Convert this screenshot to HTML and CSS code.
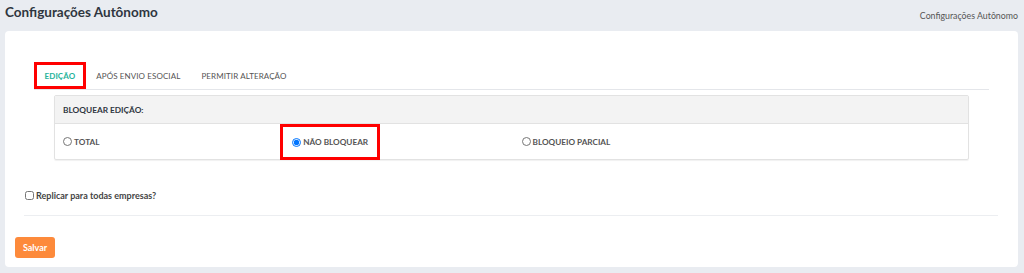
FILE: index.html
```html
<!DOCTYPE html>
<html lang="pt-BR">
<head>
    <meta charset="UTF-8">
    <meta name="viewport" content="width=device-width, initial-scale=1.0">
    <title>Configurações Autônomo</title>
    <link rel="stylesheet" href="styles.css">
</head>
<body>
    <div class="page-header">
        <h1>Configurações Autônomo</h1>
        <div class="breadcrumb">Configurações Autônomo</div>
    </div>

    <div class="card">
        <div class="form-body">
            <div class="tabs-wrap">
                <ul class="tabs">
                    <li class="tab active marked">EDIÇÃO</li>
                    <li class="tab">APÓS ENVIO ESOCIAL</li>
                    <li class="tab">PERMITIR ALTERAÇÃO</li>
                </ul>

                <div class="panel">
                    <div class="panel-heading">BLOQUEAR EDIÇÃO:</div>
                    <div class="panel-body">
                        <label class="option">
                            <input type="radio" name="bloqueio">TOTAL
                        </label>
                        <div class="option-cell">
                            <label class="option marked">
                                <input type="radio" name="bloqueio" checked>NÃO BLOQUEAR
                            </label>
                        </div>
                        <label class="option">
                            <input type="radio" name="bloqueio">BLOQUEIO PARCIAL
                        </label>
                    </div>
                </div>
            </div>

            <label class="replicar">
                <input type="checkbox">Replicar para todas empresas?
            </label>

            <hr>
        </div>

        <button class="btn-save">Salvar</button>
    </div>
</body>
</html>
```

FILE: styles.css
```css
body {
    font-family: 'Lato', 'Open Sans', sans-serif;
    background-color: #e9ecf1;
    color: #333;
    margin: 0;
    padding: 0 6px 0 5px;
}

.page-header {
    display: flex;
    justify-content: space-between;
    align-items: center;
    height: 31px;
}

h1 {
    font-size: 13.5px;
    font-weight: 700;
    color: #2f3640;
    margin: 0 0 8px 0;
}

.breadcrumb {
    font-size: 8.8px;
    color: #555;
    margin-top: 0;
}

.card {
    background-color: white;
    border-radius: 4px;
    padding: 31px 10px 9px 10px;
}

.form-body {
    padding: 0 10px 0 9px;
}

.tabs-wrap {
    padding: 0 9px 0 10px;
}

.tabs {
    list-style: none;
    margin: 0;
    padding: 0;
    display: flex;
    border-bottom: 1px solid #e4e6ea;
}

.tab {
    font-size: 8px;
    color: #555;
    padding: 0 10.5px;
    height: 27px;
    line-height: 28px;
    letter-spacing: 0.1px;
}

.tab.active {
    color: #26b39b;
    font-weight: 700;
}

.marked {
    outline: 3px solid #ff0000;
    outline-offset: -3px;
}

.panel {
    margin: 5px 20px 0 20px;
    border: 1px solid #e2e2e2;
    border-radius: 2px;
    box-shadow: 0 1px 1px rgba(0,0,0,0.06);
}

.panel-heading {
    background-color: #f3f3f3;
    border-bottom: 1px solid #e2e2e2;
    font-size: 8.3px;
    font-weight: 700;
    color: #2f3640;
    height: 27px;
    line-height: 28px;
    padding-left: 8px;
}

.panel-body {
    display: grid;
    grid-template-columns: repeat(4, 1fr);
    height: 35px;
    align-items: center;
}

.option {
    font-size: 8.2px;
    font-weight: 700;
    color: #555;
    padding-left: 8px;
    display: flex;
    align-items: center;
}

.option-cell {
    height: 35px;
    display: flex;
    align-items: stretch;
    margin-left: -3px;
}

.option-cell .option {
    padding: 0 12px 0 12px;
    height: 36px;
}

.option-cell + .option {
    padding-left: 10px;
}

.option input {
    width: 9px;
    height: 9px;
    margin: 0 2px 0 0;
}

.replicar {
    display: flex;
    align-items: center;
    margin-top: 30px;
    font-size: 9px;
    font-weight: 700;
    color: #444;
}

.replicar input {
    width: 9px;
    height: 9px;
    margin: 0 2px 0 1px;
}

hr {
    border: none;
    border-top: 1px solid #eceef1;
    margin: 14px 0 0 0;
}

.btn-save {
    margin-top: 21px;
    background-color: #fd8a3b;
    color: white;
    border: none;
    border-radius: 3px;
    font-family: 'Lato', sans-serif;
    font-weight: 700;
    font-size: 9px;
    height: 21px;
    width: 40px;
    padding: 0;
}
```
